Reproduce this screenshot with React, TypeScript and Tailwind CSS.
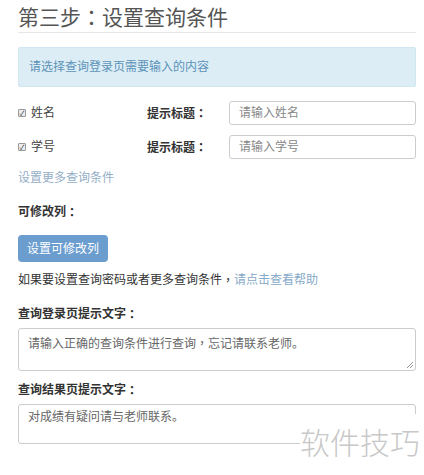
import React from "react";

const fontStack = {
  fontFamily: '"Liberation Sans", "Noto Sans CJK SC", sans-serif',
};

// centred full-width punctuation, as in the screenshot
const P = ({ c }: { c: string }) => (
  <span style={{ fontFamily: '"Noto Sans CJK TC", sans-serif' }}>{c}</span>
);

const QueryRow = ({ label, placeholder }: { label: string; placeholder: string }) => {
  return (
    <div className="flex items-center h-[24px]">
      <div className="flex items-center w-[129px]">
        <span className="w-[8px] h-[8px] border border-[#999] rounded-[1px] bg-[#eee] flex items-center justify-center text-[7px] leading-none text-[#333] mr-[5px]">
          ✓
        </span>
        <span className="text-[12px] text-[#444]">{label}</span>
      </div>
      <div className="w-[82px] text-[12px] font-bold text-[#333]">
        提示标题<P c="：" />
      </div>
      <div className="flex-1 h-[24px] border border-[#ccc] rounded-[3px] flex items-center px-[9px] text-[12px] text-[#888]">
        {placeholder}
      </div>
    </div>
  );
};

export default function App() {
  return (
    <div className="relative w-[424px] h-[475px] bg-white overflow-hidden" style={fontStack}>
      <div className="pl-[18px] pr-[8px]">
        <h1 className="h-[33px] border-b border-[#e6e6e6] text-[21px] leading-[32px] text-[#555] font-normal">
          第三步<P c="：" />设置查询条件
        </h1>

        <div className="mt-[14px] h-[40px] bg-[#dcedf6] border border-[#d0e6f1] rounded-[2px] flex items-center px-[10px] text-[12px] text-[#5d93b8]">
          请选择查询登录页需要输入的内容
        </div>

        <div className="mt-[14px] flex flex-col gap-[10px]">
          <QueryRow label="姓名" placeholder="请输入姓名" />
          <QueryRow label="学号" placeholder="请输入学号" />
        </div>

        <div className="mt-[9px] h-[20px] flex items-center text-[12px] text-[#94aec6]">
          设置更多查询条件
        </div>

        <div className="mt-[14px] h-[20px] flex items-center text-[12px] font-bold text-[#333]">
          可修改列<P c="：" />
        </div>

        <button className="mt-[13px] w-[90px] h-[27px] bg-[#6b9dcf] rounded-[4px] text-[12px] text-white flex items-center justify-center">
          设置可修改列
        </button>

        <div className="mt-[8px] h-[20px] flex items-center text-[12px] text-[#333]">
          如果要设置查询密码或者更多查询条件<P c="，" />
          <span className="text-[#86a9c8]">请点击查看帮助</span>
        </div>

        <div className="mt-[14px] h-[20px] flex items-center text-[12px] font-bold text-[#333]">
          查询登录页提示文字<P c="：" />
        </div>

        <div className="relative mt-[4px] h-[43px] border border-[#ccc] rounded-[3px] px-[9px] pt-[5px] text-[12px] text-[#666]">
          请输入正确的查询条件进行查询<P c="，" />忘记请联系老师。
          <svg className="absolute right-[1px] bottom-[1px]" width="8" height="8" viewBox="0 0 8 8">
            <path d="M7 1 L1 7 M7 4 L4 7" stroke="#999" strokeWidth="1" />
          </svg>
        </div>

        <div className="mt-[9px] h-[20px] flex items-center text-[12px] font-bold text-[#333]">
          查询结果页提示文字<P c="：" />
        </div>

        <div className="mt-[4px] h-[40px] border border-[#ccc] rounded-[3px] px-[9px] pt-[3px] text-[12px] text-[#666]">
          对成绩有疑问请与老师联系。
        </div>
      </div>

      <div className="absolute left-[300px] top-[414px] w-[124px] h-[61px] bg-white flex items-start pt-[7px]">
        <span
          className="text-[30px] leading-[40px] text-[#c8c8c8] font-light"
          style={{ fontFamily: '"Noto Sans CJK SC", sans-serif' }}
        >
          软件技巧
        </span>
      </div>
    </div>
  );
}
